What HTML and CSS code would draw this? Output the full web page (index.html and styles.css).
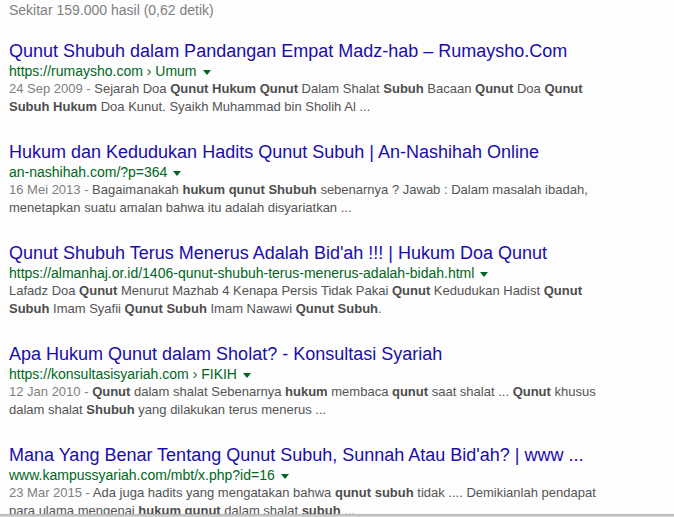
FILE: index.html
```html
<!DOCTYPE html>
<html lang="id">
<head>
<meta charset="utf-8">
<title>Hasil Pencarian</title>
<link rel="stylesheet" href="styles.css">
</head>
<body>
<div class="page">
  <div class="stats">Sekitar 159.000 hasil (0,62 detik)</div>
  <div class="results">
    <div class="result">
      <a class="title" href="#">Qunut Shubuh dalam Pandangan Empat Madz-hab – Rumaysho.Com</a>
      <div class="url"><cite>https://rumaysho.com › Umum</cite><span class="caret"></span></div>
      <div class="snippet"><span class="date">24 Sep 2009 - </span>Sejarah Doa <b>Qunut Hukum Qunut</b> Dalam Shalat <b>Subuh</b> Bacaan <b>Qunut</b> Doa <b>Qunut</b><br><b>Subuh Hukum</b> Doa Kunut. Syaikh Muhammad bin Sholih Al ...</div>
    </div>
    <div class="result">
      <a class="title" href="#">Hukum dan Kedudukan Hadits Qunut Subuh | An-Nashihah Online</a>
      <div class="url"><cite>an-nashihah.com/?p=364</cite><span class="caret"></span></div>
      <div class="snippet"><span class="date">16 Mei 2013 - </span>Bagaimanakah <b>hukum qunut Shubuh</b> sebenarnya ? Jawab : Dalam masalah ibadah,<br>menetapkan suatu amalan bahwa itu adalah disyariatkan ...</div>
    </div>
    <div class="result">
      <a class="title" href="#">Qunut Shubuh Terus Menerus Adalah Bid'ah !!! | Hukum Doa Qunut</a>
      <div class="url"><cite>https://almanhaj.or.id/1406-qunut-shubuh-terus-menerus-adalah-bidah.html</cite><span class="caret"></span></div>
      <div class="snippet">Lafadz Doa <b>Qunut</b> Menurut Mazhab 4 Kenapa Persis Tidak Pakai <b>Qunut</b> Kedudukan Hadist <b>Qunut</b><br><b>Subuh</b> Imam Syafii <b>Qunut Subuh</b> Imam Nawawi <b>Qunut Subuh</b>.</div>
    </div>
    <div class="result">
      <a class="title" href="#">Apa Hukum Qunut dalam Sholat? - Konsultasi Syariah</a>
      <div class="url"><cite>https://konsultasisyariah.com › FIKIH</cite><span class="caret"></span></div>
      <div class="snippet"><span class="date">12 Jan 2010 - </span><b>Qunut</b> dalam shalat Sebenarnya <b>hukum</b> membaca <b>qunut</b> saat shalat ... <b>Qunut</b> khusus<br>dalam shalat <b>Shubuh</b> yang dilakukan terus menerus ...</div>
    </div>
    <div class="result">
      <a class="title" href="#">Mana Yang Benar Tentang Qunut Subuh, Sunnah Atau Bid'ah? | www ...</a>
      <div class="url"><cite>www.kampussyariah.com/mbt/x.php?id=16</cite><span class="caret"></span></div>
      <div class="snippet"><span class="date">23 Mar 2015 - </span>Ada juga hadits yang mengatakan bahwa <b>qunut subuh</b> tidak .... Demikianlah pendapat<br>para ulama mengenai <b>hukum qunut</b> dalam shalat <b>subuh</b> ...</div>
    </div>
  </div>
</div>
<div class="bottom-edge"></div>
</body>
</html>
```
FILE: styles.css
```css
html, body {
  margin: 0;
  padding: 0;
  background: #fdfdfd;
}
body {
  font-family: "Liberation Sans", Arial, sans-serif;
  overflow: hidden;
  height: 517px;
}
.page {
  padding: 0 9px;
}
.stats {
  font-size: 14px;
  line-height: 20px;
  color: #808080;
}
.results {
  margin-top: 20px;
  display: flex;
  flex-direction: column;
  gap: 25px;
}
.result {
  display: flex;
  flex-direction: column;
  white-space: nowrap;
}
.title {
  font-size: 18px;
  line-height: 22px;
  color: #1a0dab;
  text-decoration: none;
}
.url {
  display: flex;
  align-items: center;
  font-size: 14px;
  line-height: 18px;
  color: #006621;
}
.url cite {
  font-style: normal;
}
.caret {
  width: 0;
  height: 0;
  margin-left: 6px;
  margin-top: 2px;
  border-left: 4px solid transparent;
  border-right: 4px solid transparent;
  border-top: 5px solid #006621;
}
.snippet {
  font-size: 13px;
  line-height: 18px;
  color: #545454;
}
.snippet b {
  color: #4d4d4d;
}
.date {
  color: #808080;
}
.bottom-edge {
  position: fixed;
  left: 0;
  right: 0;
  bottom: 0;
  height: 3px;
  background: linear-gradient(#b4b4b4, #d8d8d8);
}
```
